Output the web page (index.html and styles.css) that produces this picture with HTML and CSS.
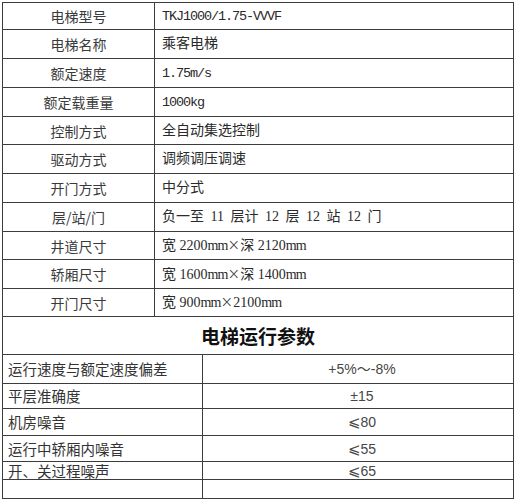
FILE: index.html
```html
<!DOCTYPE html>
<html lang="zh-CN">
<head>
<meta charset="utf-8">
<title>电梯参数</title>
<link rel="stylesheet" href="styles.css">
</head>
<body>
<table class="sheet">
  <colgroup>
    <col class="c1">
    <col class="c2">
    <col class="c3">
  </colgroup>
  <tbody>
    <tr class="r27"><td class="lbl">电梯型号</td><td class="val" colspan="2"><span class="mono">TKJ1000/1.75-VVVF</span></td></tr>
    <tr class="r29"><td class="lbl">电梯名称</td><td class="val" colspan="2">乘客电梯</td></tr>
    <tr class="r29"><td class="lbl">额定速度</td><td class="val" colspan="2"><span class="mono">1.75m/s</span></td></tr>
    <tr class="r29"><td class="lbl">额定载重量</td><td class="val" colspan="2"><span class="mono">1000kg</span></td></tr>
    <tr class="r28"><td class="lbl">控制方式</td><td class="val" colspan="2">全自动集选控制</td></tr>
    <tr class="r29"><td class="lbl">驱动方式</td><td class="val" colspan="2">调频调压调速</td></tr>
    <tr class="r29"><td class="lbl">开门方式</td><td class="val" colspan="2">中分式</td></tr>
    <tr class="r29"><td class="lbl">层/站/门</td><td class="val floors" colspan="2">负一至 11 层计 12 层 12 站 12 门</td></tr>
    <tr class="r28"><td class="lbl">井道尺寸</td><td class="val" colspan="2">宽 2200<span class="mm">mm</span><span class="x">×</span>深 2120<span class="mm">mm</span></td></tr>
    <tr class="r29"><td class="lbl">轿厢尺寸</td><td class="val" colspan="2">宽 1600<span class="mm">mm</span><span class="x">×</span>深 1400<span class="mm">mm</span></td></tr>
    <tr class="r28"><td class="lbl">开门尺寸</td><td class="val" colspan="2">宽 900<span class="mm">mm</span><span class="x">×</span>2100<span class="mm">mm</span></td></tr>
    <tr class="r38"><td class="title" colspan="3">电梯运行参数</td></tr>
    <tr class="r29"><td class="plbl" colspan="2">运行速度与额定速度偏差</td><td class="pval">+5%～-8%</td></tr>
    <tr class="r25"><td class="plbl" colspan="2">平层准确度</td><td class="pval">±15</td></tr>
    <tr class="r27"><td class="plbl" colspan="2">机房噪音</td><td class="pval"><span class="le">⩽</span>80</td></tr>
    <tr class="r26"><td class="plbl" colspan="2">运行中轿厢内噪音</td><td class="pval"><span class="le">⩽</span>55</td></tr>
    <tr class="r18"><td class="plbl" colspan="2">开、关过程噪声</td><td class="pval"><span class="le">⩽</span>65</td></tr>
    <tr class="r19"><td class="plbl" colspan="2"></td><td class="pval"></td></tr>
  </tbody>
</table>
</body>
</html>
```
FILE: styles.css
```css
html, body {
  margin: 0;
  padding: 0;
  background: #ffffff;
}

.sheet {
  border-collapse: collapse;
  table-layout: fixed;
  width: 512px;
  margin: 2px 0 0 2px;
  font-family: "Liberation Serif", "Noto Sans CJK SC", serif;
  color: #2a2a2a;
}

.c1 { width: 152px; }
.c2 { width: 48px; }
.c3 { width: 311px; }

.sheet td {
  border: 1px solid #3c3c3c;
  padding: 0;
  vertical-align: middle;
  line-height: 14px;
  white-space: nowrap;
}

.r18 { height: 18px; }
.r19 { height: 19px; }
.r25 { height: 25px; }
.r26 { height: 26px; }
.r27 { height: 27px; }
.r28 { height: 28px; }
.r29 { height: 29px; }
.r38 { height: 38px; }

.lbl {
  text-align: center;
  font-family: "Noto Sans CJK SC", sans-serif;
  font-size: 14px;
  color: #3a3a3a;
}

.val {
  padding-left: 7px !important;
  font-size: 14px;
  color: #2a2a2a;
}

.floors {
  word-spacing: 3px;
}

.mono {
  font-family: "Liberation Mono", monospace;
  font-size: 13.5px;
  letter-spacing: -1.1px;
}

.mm {
  letter-spacing: -1px;
}

.x {
  display: inline-block;
  width: 13px;
  text-align: center;
  font-family: "DejaVu Sans", sans-serif;
  font-size: 15px;
  font-weight: 300;
}

.title {
  text-align: center;
  font-family: "Noto Sans CJK SC", sans-serif;
  font-weight: 700;
  font-size: 19px;
  line-height: 20px !important;
  color: #111111;
}

.plbl {
  padding-left: 5px !important;
  font-family: "Noto Sans CJK SC", sans-serif;
  font-size: 14.5px;
  color: #333333;
}

.pval {
  text-align: center;
  padding-left: 8px !important;
  font-family: "Liberation Sans", "Noto Sans CJK SC", sans-serif;
  font-size: 14px;
  color: #474747;
}

.le {
  font-family: "DejaVu Sans", sans-serif;
  font-size: 15px;
}
```
